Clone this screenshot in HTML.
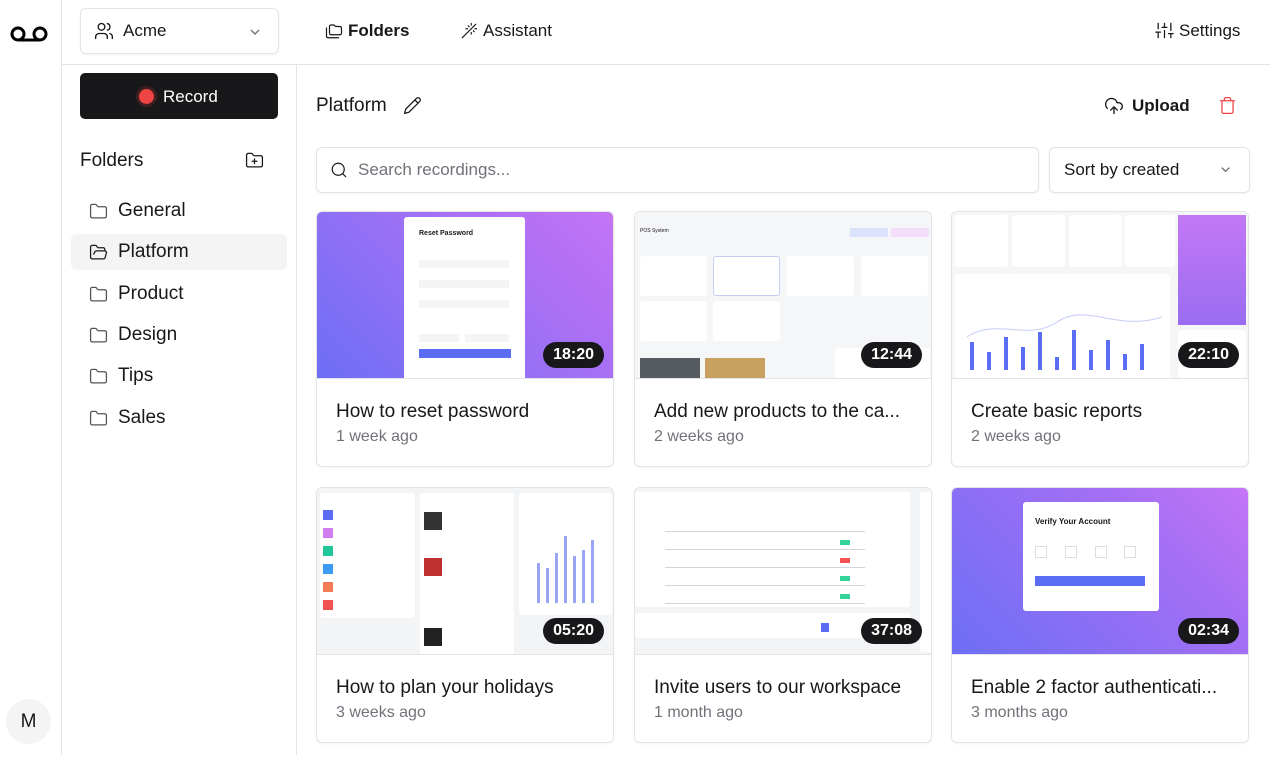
<!DOCTYPE html>
<html><head><meta charset="utf-8"><style>
*{box-sizing:border-box;margin:0;padding:0}
body{width:1270px;height:760px;background:#fff;font-family:"Liberation Sans",sans-serif;color:#18181b;position:relative;overflow:hidden}
.abs{position:absolute}
svg{display:block}
.ic{fill:none;stroke:#18181b;stroke-width:1.6;stroke-linecap:round;stroke-linejoin:round}
.folder{left:71px;width:216px;height:36px;border-radius:6px;display:flex;align-items:center;padding-left:18px;font-size:19px;gap:10px}
.card{position:absolute;width:298px;height:256px;border:1px solid #e4e4e7;border-radius:6px;overflow:hidden;background:#fff;box-shadow:0 1px 2px rgba(0,0,0,.04)}
.thumb{height:167px;position:relative;border-bottom:1px solid #e4e4e7;overflow:hidden}
.badge{position:absolute;right:9px;bottom:10px;background:#18181b;color:#fff;font-size:16px;font-weight:bold;border-radius:13px;padding:4px 10px;height:26px;line-height:18px}
.ttl{position:absolute;left:19px;top:189px;font-size:19px;white-space:nowrap}
.sub{position:absolute;left:19px;top:216px;font-size:16px;color:#71717a}
.wb{position:absolute;background:#fff;border-radius:3px}
.gb{position:absolute;background:#f4f4f5}
</style></head><body>
<!-- rails -->
<div class="abs" style="left:61px;top:0;width:1px;height:755px;background:#e4e4e7"></div>
<div class="abs" style="left:62px;top:64px;width:1208px;height:1px;background:#e4e4e7"></div>
<div class="abs" style="left:296px;top:65px;width:1px;height:690px;background:#e4e4e7"></div>
<!-- logo -->
<svg class="abs" style="left:10px;top:25px" width="38" height="18" viewBox="0 0 38 18"><circle cx="8" cy="9" r="6" fill="none" stroke="#000" stroke-width="3"/><circle cx="30" cy="9" r="6" fill="none" stroke="#000" stroke-width="3"/><line x1="8" y1="15" x2="30" y2="15" stroke="#000" stroke-width="3"/></svg>
<div class="abs" style="left:6px;top:699px;width:45px;height:45px;border-radius:50%;background:#f4f4f5;font-size:19px;text-align:center;line-height:45px">M</div>
<!-- acme -->
<div class="abs" style="left:80px;top:8px;width:199px;height:46px;border:1px solid #e4e4e7;border-radius:6px;box-shadow:0 1px 2px rgba(0,0,0,.05)"></div>
<svg class="abs ic" style="left:94px;top:21px" width="20" height="20" viewBox="0 0 24 24"><circle cx="9" cy="7" r="4"/><path d="M2 21v-2a4 4 0 0 1 4-4h6a4 4 0 0 1 4 4v2M16 3.1a4 4 0 0 1 0 7.8M22 21v-2a4 4 0 0 0-3-3.9"/></svg>
<div class="abs" style="left:123px;top:21px;font-size:17px">Acme</div>
<svg class="abs" style="left:247px;top:24px" width="16" height="16" viewBox="0 0 24 24"><path d="M6 9l6 6 6-6" fill="none" stroke="#71717a" stroke-width="2"/></svg>
<!-- nav -->
<svg class="abs ic" style="left:325px;top:22px" width="18" height="18" viewBox="0 0 24 24"><path d="M8 17h12a2 2 0 0 0 2-2V8a2 2 0 0 0-2-2h-6l-2-2H8a2 2 0 0 0-2 2v9a2 2 0 0 0 2 2z"/><path d="M2 8v11a2 2 0 0 0 2 2h14"/></svg>
<div class="abs" style="left:348px;top:21px;font-size:17px;font-weight:bold">Folders</div>
<svg class="abs ic" style="left:460px;top:22px" width="18" height="18" viewBox="0 0 24 24"><path d="M21 3L3 21M15 4V2M15 16v-2M8 9h2M20 9h2M17.8 11.8L19 13M17.8 6.2L19 5M12.2 6.2L11 5M12.2 11.8L11 13"/></svg>
<div class="abs" style="left:483px;top:21px;font-size:17px">Assistant</div>
<svg class="abs ic" style="left:1155px;top:21px" width="19" height="19" viewBox="0 0 24 24"><path d="M4 21v-7M4 10V3M12 21v-9M12 8V3M20 21v-5M20 12V3M1 14h6M9 8h6M17 16h6"/></svg>
<div class="abs" style="left:1179px;top:21px;font-size:17px">Settings</div>
<!-- record -->
<div class="abs" style="left:80px;top:73px;width:198px;height:46px;background:#18181b;border-radius:5px"></div>
<div class="abs" style="left:136px;top:86px;width:21px;height:21px;border-radius:50%;background:#3f1f1f"></div>
<div class="abs" style="left:139px;top:89px;width:15px;height:15px;border-radius:50%;background:#ef4444"></div>
<div class="abs" style="left:163px;top:87px;font-size:17px;color:#fff">Record</div>
<!-- folders -->
<div class="abs" style="left:80px;top:150px;font-size:19px">Folders</div>
<svg class="abs ic" style="left:245px;top:151px" width="19" height="19" viewBox="0 0 24 24"><path d="M20 20a2 2 0 0 0 2-2V8a2 2 0 0 0-2-2h-7.9a2 2 0 0 1-1.7-.9l-.8-1.2A2 2 0 0 0 7.9 3H4a2 2 0 0 0-2 2v13a2 2 0 0 0 2 2z"/><path d="M12 10v6M9 13h6"/></svg>
<div class="abs folder" style="top:193px"><svg class="ic" style="stroke:#52525b" width="19" height="19" viewBox="0 0 24 24"><path d="M20 20a2 2 0 0 0 2-2V8a2 2 0 0 0-2-2h-7.9a2 2 0 0 1-1.7-.9l-.8-1.2A2 2 0 0 0 7.9 3H4a2 2 0 0 0-2 2v13a2 2 0 0 0 2 2z"/></svg>General</div>
<div class="abs folder" style="top:234px;background:#f4f4f5"><svg class="ic" width="19" height="19" viewBox="0 0 24 24"><path d="M6 14l1.5-2.9A2 2 0 0 1 9.2 10H20a2 2 0 0 1 1.9 2.5l-1.5 6A2 2 0 0 1 18.5 20H4a2 2 0 0 1-2-2V5a2 2 0 0 1 2-2h3.9a2 2 0 0 1 1.7.9l.8 1.2a2 2 0 0 0 1.7.9H18a2 2 0 0 1 2 2v2"/></svg>Platform</div>
<div class="abs folder" style="top:276px"><svg class="ic" style="stroke:#52525b" width="19" height="19" viewBox="0 0 24 24"><path d="M20 20a2 2 0 0 0 2-2V8a2 2 0 0 0-2-2h-7.9a2 2 0 0 1-1.7-.9l-.8-1.2A2 2 0 0 0 7.9 3H4a2 2 0 0 0-2 2v13a2 2 0 0 0 2 2z"/></svg>Product</div>
<div class="abs folder" style="top:317px"><svg class="ic" style="stroke:#52525b" width="19" height="19" viewBox="0 0 24 24"><path d="M20 20a2 2 0 0 0 2-2V8a2 2 0 0 0-2-2h-7.9a2 2 0 0 1-1.7-.9l-.8-1.2A2 2 0 0 0 7.9 3H4a2 2 0 0 0-2 2v13a2 2 0 0 0 2 2z"/></svg>Design</div>
<div class="abs folder" style="top:358px"><svg class="ic" style="stroke:#52525b" width="19" height="19" viewBox="0 0 24 24"><path d="M20 20a2 2 0 0 0 2-2V8a2 2 0 0 0-2-2h-7.9a2 2 0 0 1-1.7-.9l-.8-1.2A2 2 0 0 0 7.9 3H4a2 2 0 0 0-2 2v13a2 2 0 0 0 2 2z"/></svg>Tips</div>
<div class="abs folder" style="top:400px"><svg class="ic" style="stroke:#52525b" width="19" height="19" viewBox="0 0 24 24"><path d="M20 20a2 2 0 0 0 2-2V8a2 2 0 0 0-2-2h-7.9a2 2 0 0 1-1.7-.9l-.8-1.2A2 2 0 0 0 7.9 3H4a2 2 0 0 0-2 2v13a2 2 0 0 0 2 2z"/></svg>Sales</div>
<!-- main header -->
<div class="abs" style="left:316px;top:95px;font-size:19px">Platform</div>
<svg class="abs ic" style="left:403px;top:96px" width="19" height="19" viewBox="0 0 24 24"><path d="M17 3a2.8 2.8 0 1 1 4 4L7.5 20.5 2 22l1.5-5.5zM15 5l4 4"/></svg>
<svg class="abs ic" style="left:1104px;top:96px" width="20" height="20" viewBox="0 0 24 24"><path d="M12 13v8M4 14.9A7 7 0 1 1 15.7 8h1.8a4.5 4.5 0 0 1 2.5 8.2M8 17l4-4 4 4"/></svg>
<div class="abs" style="left:1132px;top:96px;font-size:17px;font-weight:bold">Upload</div>
<svg class="abs ic" style="left:1218px;top:96px;stroke:#ef4444" width="19" height="19" viewBox="0 0 24 24"><path d="M3 6h18M19 6v14a2 2 0 0 1-2 2H7a2 2 0 0 1-2-2V6M8 6V4a2 2 0 0 1 2-2h4a2 2 0 0 1 2 2v2"/></svg>
<!-- search -->
<div class="abs" style="left:316px;top:147px;width:723px;height:46px;border:1px solid #e4e4e7;border-radius:6px;box-shadow:0 1px 2px rgba(0,0,0,.05)"></div>
<svg class="abs ic" style="left:330px;top:161px" width="18" height="18" viewBox="0 0 24 24"><circle cx="11" cy="11" r="8"/><path d="M21 21l-4.3-4.3"/></svg>
<div class="abs" style="left:358px;top:160px;font-size:17px;color:#71717a">Search recordings...</div>
<div class="abs" style="left:1049px;top:147px;width:201px;height:46px;border:1px solid #e4e4e7;border-radius:6px;box-shadow:0 1px 2px rgba(0,0,0,.05)"></div>
<div class="abs" style="left:1064px;top:160px;font-size:17px">Sort by created</div>
<svg class="abs" style="left:1218px;top:162px" width="15" height="15" viewBox="0 0 24 24"><path d="M6 9l6 6 6-6" fill="none" stroke="#71717a" stroke-width="2"/></svg>

<!-- card 1 -->
<div class="card" style="left:316px;top:211px"><div class="thumb" style="background:linear-gradient(45deg,#6d6ff5,#b570f5 80%,#c475f5)">
<div class="wb" style="left:87px;top:5px;width:121px;height:165px"></div>
<div class="abs" style="left:102px;top:18px;font-size:7px;font-weight:bold">Reset Password</div>
<div class="gb" style="left:102px;top:48px;width:90px;height:8px"></div><div class="gb" style="left:102px;top:68px;width:90px;height:8px"></div><div class="gb" style="left:102px;top:88px;width:90px;height:8px"></div>
<div class="gb" style="left:102px;top:122px;width:40px;height:8px"></div><div class="gb" style="left:148px;top:122px;width:44px;height:8px"></div>
<div class="abs" style="left:102px;top:137px;width:92px;height:9px;background:#5b6df5"></div>
<div class="badge">18:20</div></div>
<div class="ttl">How to reset password</div><div class="sub">1 week ago</div></div>
<!-- card 2 -->
<div class="card" style="left:634px;top:211px"><div class="thumb" style="background:#f5f6f8">
<div class="abs" style="left:5px;top:16px;font-size:5px">POS System</div>
<div class="abs" style="left:215px;top:16px;width:38px;height:9px;background:#dbe2fb"></div><div class="abs" style="left:256px;top:16px;width:38px;height:9px;background:#f4dcfb"></div>
<div class="wb" style="left:5px;top:44px;width:67px;height:40px"></div><div class="wb" style="left:78px;top:44px;width:67px;height:40px;border:1px solid #c7cdf5"></div><div class="wb" style="left:152px;top:44px;width:67px;height:40px"></div><div class="wb" style="left:226px;top:44px;width:67px;height:40px"></div>
<div class="wb" style="left:5px;top:89px;width:67px;height:40px"></div><div class="wb" style="left:78px;top:89px;width:67px;height:40px"></div>
<div class="abs" style="left:5px;top:146px;width:60px;height:25px;background:#555b60"></div><div class="abs" style="left:70px;top:146px;width:60px;height:25px;background:#c8a060"></div>
<div class="wb" style="left:200px;top:136px;width:95px;height:35px"></div>
<div class="badge">12:44</div></div>
<div class="ttl">Add new products to the ca...</div><div class="sub">2 weeks ago</div></div>
<!-- card 3 -->
<div class="card" style="left:951px;top:211px"><div class="thumb" style="background:#f5f6f8">
<div class="wb" style="left:3px;top:3px;width:53px;height:52px"></div><div class="wb" style="left:60px;top:3px;width:53px;height:52px"></div><div class="wb" style="left:117px;top:3px;width:53px;height:52px"></div><div class="wb" style="left:173px;top:3px;width:50px;height:52px"></div>
<div class="abs" style="left:226px;top:3px;width:68px;height:110px;background:linear-gradient(180deg,#c378f5,#9a6cf2)"></div>
<div class="wb" style="left:3px;top:62px;width:215px;height:105px"></div>
<svg class="abs" style="left:15px;top:100px" width="195" height="60"><g fill="#5b6df5"><rect x="3" y="30" width="4" height="28"/><rect x="20" y="40" width="4" height="18"/><rect x="37" y="25" width="4" height="33"/><rect x="54" y="35" width="4" height="23"/><rect x="71" y="20" width="4" height="38"/><rect x="88" y="45" width="4" height="13"/><rect x="105" y="18" width="4" height="40"/><rect x="122" y="38" width="4" height="20"/><rect x="139" y="28" width="4" height="30"/><rect x="156" y="42" width="4" height="16"/><rect x="173" y="32" width="4" height="26"/></g><path d="M0 25 C30 5 60 30 90 10 S150 20 195 5" fill="none" stroke="#c6cdf7"/></svg>
<div class="wb" style="left:226px;top:118px;width:68px;height:50px"></div>
<div class="badge">22:10</div></div>
<div class="ttl">Create basic reports</div><div class="sub">2 weeks ago</div></div>
<!-- card 4 -->
<div class="card" style="left:316px;top:487px"><div class="thumb" style="background:#f3f4f6">
<div class="wb" style="left:3px;top:5px;width:95px;height:125px"></div>
<div class="abs" style="left:6px;top:22px;width:10px;height:10px;background:#5b6df5"></div><div class="abs" style="left:6px;top:40px;width:10px;height:10px;background:#d07df0"></div><div class="abs" style="left:6px;top:58px;width:10px;height:10px;background:#22c597"></div><div class="abs" style="left:6px;top:76px;width:10px;height:10px;background:#3b9bf0"></div><div class="abs" style="left:6px;top:94px;width:10px;height:10px;background:#f47b55"></div><div class="abs" style="left:6px;top:112px;width:10px;height:10px;background:#f05252"></div>
<div class="wb" style="left:103px;top:5px;width:94px;height:162px"></div>
<div class="abs" style="left:107px;top:24px;width:18px;height:18px;background:#333"></div><div class="abs" style="left:107px;top:70px;width:18px;height:18px;background:#c03030"></div><div class="abs" style="left:107px;top:140px;width:18px;height:18px;background:#222"></div>
<div class="wb" style="left:202px;top:5px;width:93px;height:122px"></div>
<svg class="abs" style="left:215px;top:40px" width="75" height="80"><g fill="#9aa4f5"><rect x="5" y="35" width="3" height="40"/><rect x="14" y="40" width="3" height="35"/><rect x="23" y="25" width="3" height="50"/><rect x="32" y="8" width="3" height="67"/><rect x="41" y="28" width="3" height="47"/><rect x="50" y="22" width="3" height="53"/><rect x="59" y="12" width="3" height="63"/></g></svg>
<div class="badge">05:20</div></div>
<div class="ttl">How to plan your holidays</div><div class="sub">3 weeks ago</div></div>
<!-- card 5 -->
<div class="card" style="left:634px;top:487px"><div class="thumb" style="background:#f3f4f6">
<div class="wb" style="left:0;top:4px;width:275px;height:115px"></div>
<div class="wb" style="left:0;top:125px;width:275px;height:25px"></div>
<div class="wb" style="left:285px;top:4px;width:13px;height:160px"></div>
<svg class="abs" style="left:0;top:40px" width="230" height="85"><g fill="#d1d5db"><rect x="30" y="3" width="200" height="1"/><rect x="30" y="21" width="200" height="1"/><rect x="30" y="39" width="200" height="1"/><rect x="30" y="57" width="200" height="1"/><rect x="30" y="75" width="200" height="1"/></g><g><rect x="205" y="-6" width="10" height="5" fill="#34d399"/><rect x="205" y="12" width="10" height="5" fill="#34d399"/><rect x="205" y="30" width="10" height="5" fill="#f05252"/><rect x="205" y="48" width="10" height="5" fill="#34d399"/><rect x="205" y="66" width="10" height="5" fill="#34d399"/></g></svg>
<div class="abs" style="left:186px;top:135px;width:8px;height:9px;background:#5b6df5"></div>
<div class="badge">37:08</div></div>
<div class="ttl">Invite users to our workspace</div><div class="sub">1 month ago</div></div>
<!-- card 6 -->
<div class="card" style="left:951px;top:487px"><div class="thumb" style="background:linear-gradient(45deg,#6d6ff5,#a56ff5 70%,#c475f5)">
<div class="wb" style="left:71px;top:14px;width:136px;height:109px"></div>
<div class="abs" style="left:83px;top:29px;font-size:8px;font-weight:bold">Verify Your Account</div>
<div class="abs" style="left:83px;top:58px;width:12px;height:12px;border:1px solid #ddd"></div><div class="abs" style="left:113px;top:58px;width:12px;height:12px;border:1px solid #ddd"></div><div class="abs" style="left:143px;top:58px;width:12px;height:12px;border:1px solid #ddd"></div><div class="abs" style="left:172px;top:58px;width:12px;height:12px;border:1px solid #ddd"></div>
<div class="abs" style="left:83px;top:88px;width:110px;height:10px;background:#5b6df5"></div>
<div class="badge">02:34</div></div>
<div class="ttl">Enable 2 factor authenticati...</div><div class="sub">3 months ago</div></div>
</body></html>
